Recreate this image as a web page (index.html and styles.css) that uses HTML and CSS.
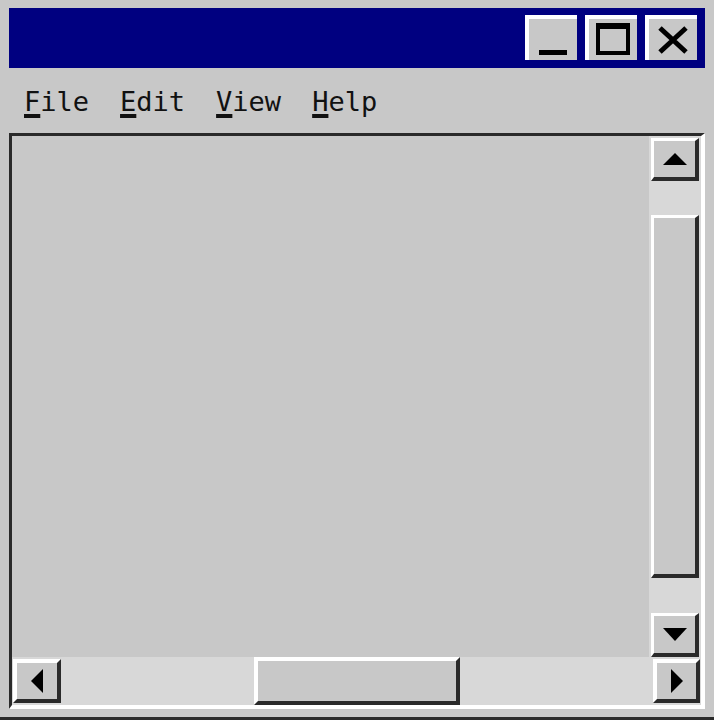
FILE: index.html
```
<!DOCTYPE html>
<html>
<head>
<meta charset="utf-8">
<link rel="stylesheet" href="styles.css">
</head>
<body>
<div class="window">
  <div class="titlebar">
    <div class="tbtn">
      <svg width="48" height="41" viewBox="0 0 48 41"><rect x="10" y="31" width="28" height="5" fill="#000"/></svg>
    </div>
    <div class="tbtn">
      <svg width="48" height="41" viewBox="0 0 48 41"><path fill="#000" fill-rule="evenodd" d="M7 4H41V36H7Z M11 10V32H37V10Z"/></svg>
    </div>
    <div class="tbtn">
      <svg width="48" height="41" viewBox="0 0 48 41"><path stroke="#000" stroke-width="5" d="M11 9L37 33M37 9L11 33"/></svg>
    </div>
  </div>
  <div class="menubar">
    <span class="menu-item"><u>F</u>ile</span>
    <span class="menu-item"><u>E</u>dit</span>
    <span class="menu-item"><u>V</u>iew</span>
    <span class="menu-item"><u>H</u>elp</span>
  </div>
  <div class="frame">
    <div class="content"></div>
    <div class="vscroll">
      <div class="sbtn vbtn up">
        <svg width="24" height="12" viewBox="0 0 24 12"><path d="M12 0L24 12H0Z" fill="#000"/></svg>
      </div>
      <div class="vtrack">
        <div class="vthumb"></div>
      </div>
      <div class="sbtn vbtn down">
        <svg width="24" height="13" viewBox="0 0 24 13"><path d="M0 0H24L12 13Z" fill="#000"/></svg>
      </div>
    </div>
    <div class="hscroll">
      <div class="sbtn hbtn left">
        <svg width="12" height="24" viewBox="0 0 12 24"><path d="M12 0V24L0 12Z" fill="#000"/></svg>
      </div>
      <div class="htrack">
        <div class="hthumb"></div>
      </div>
      <div class="sbtn hbtn right">
        <svg width="12" height="24" viewBox="0 0 12 24"><path d="M0 0L12 12L0 24Z" fill="#000"/></svg>
      </div>
    </div>
  </div>
</div>
</body>
</html>
```

FILE: styles.css
```
html, body {
  margin: 0;
  padding: 0;
  background: #c8c8c8;
}

.window {
  box-sizing: border-box;
  width: 714px;
  height: 720px;
  padding: 8px 9px 8px 9px;
  border-bottom: 3px solid #2a2a2a;
  background: #c8c8c8;
  display: flex;
  flex-direction: column;
}

.titlebar {
  box-sizing: border-box;
  height: 60px;
  background: #000080;
  display: flex;
  justify-content: flex-end;
  gap: 8px;
  padding: 7px 8px 8px 0;
}

.tbtn {
  box-sizing: border-box;
  width: 52px;
  height: 45px;
  background: #c8c8c8;
  border-top: 4px solid #fff;
  border-left: 4px solid #fff;
  display: flex;
}

.tbtn svg {
  display: block;
}

.menubar {
  box-sizing: border-box;
  height: 65px;
  padding: 18px 0 0 15px;
  display: flex;
  gap: 31px;
  font-family: "DejaVu Sans Mono", monospace;
  font-size: 27px;
  line-height: 32px;
  color: #111;
}

.menu-item u {
  text-decoration: underline;
  text-decoration-thickness: 4px;
  text-underline-offset: 3px;
}

.frame {
  box-sizing: border-box;
  width: 696px;
  height: 576px;
  border-style: solid;
  border-width: 3px 4px 4px 3px;
  border-color: #2a2a2a #fff #fff #2a2a2a;
  display: grid;
  grid-template-columns: 1fr 52px;
  grid-template-rows: 1fr 48px;
}

.content {
  background: #c8c8c8;
}

.vscroll {
  background: #d8d8d8;
  display: flex;
  flex-direction: column;
  padding: 2px 1px 0 2px;
}

.sbtn {
  box-sizing: border-box;
  background: #c8c8c8;
  border-style: solid;
  border-color: #fff #2a2a2a #2a2a2a #fff;
  display: flex;
  align-items: center;
  justify-content: center;
}

.sbtn svg {
  display: block;
}

.vbtn {
  width: 48px;
  height: 43px;
  border-width: 3px 4px 4px 3px;
}

.vbtn.down {
  height: 44px;
}

.vtrack {
  flex: 1;
  display: flex;
  flex-direction: column;
  padding: 34px 0 35px 0;
}

.vthumb {
  flex: 1;
  box-sizing: border-box;
  width: 48px;
  background: #c8c8c8;
  border-style: solid;
  border-width: 3px 4px 4px 3px;
  border-color: #fff #2a2a2a #2a2a2a #fff;
}

.hscroll {
  grid-column: 1 / 3;
  background: #d8d8d8;
  display: flex;
  align-items: center;
  padding: 0 1px 0 1px;
}

.hbtn {
  width: 48px;
  height: 44px;
  border-width: 4px;
}

.hbtn.right {
  width: 47px;
}

.htrack {
  flex: 1;
  height: 100%;
  display: flex;
  padding-left: 193px;
}

.hthumb {
  box-sizing: border-box;
  width: 206px;
  height: 48px;
  background: #c8c8c8;
  border-style: solid;
  border-width: 4px;
  border-color: #fff #2a2a2a #2a2a2a #fff;
}
```
